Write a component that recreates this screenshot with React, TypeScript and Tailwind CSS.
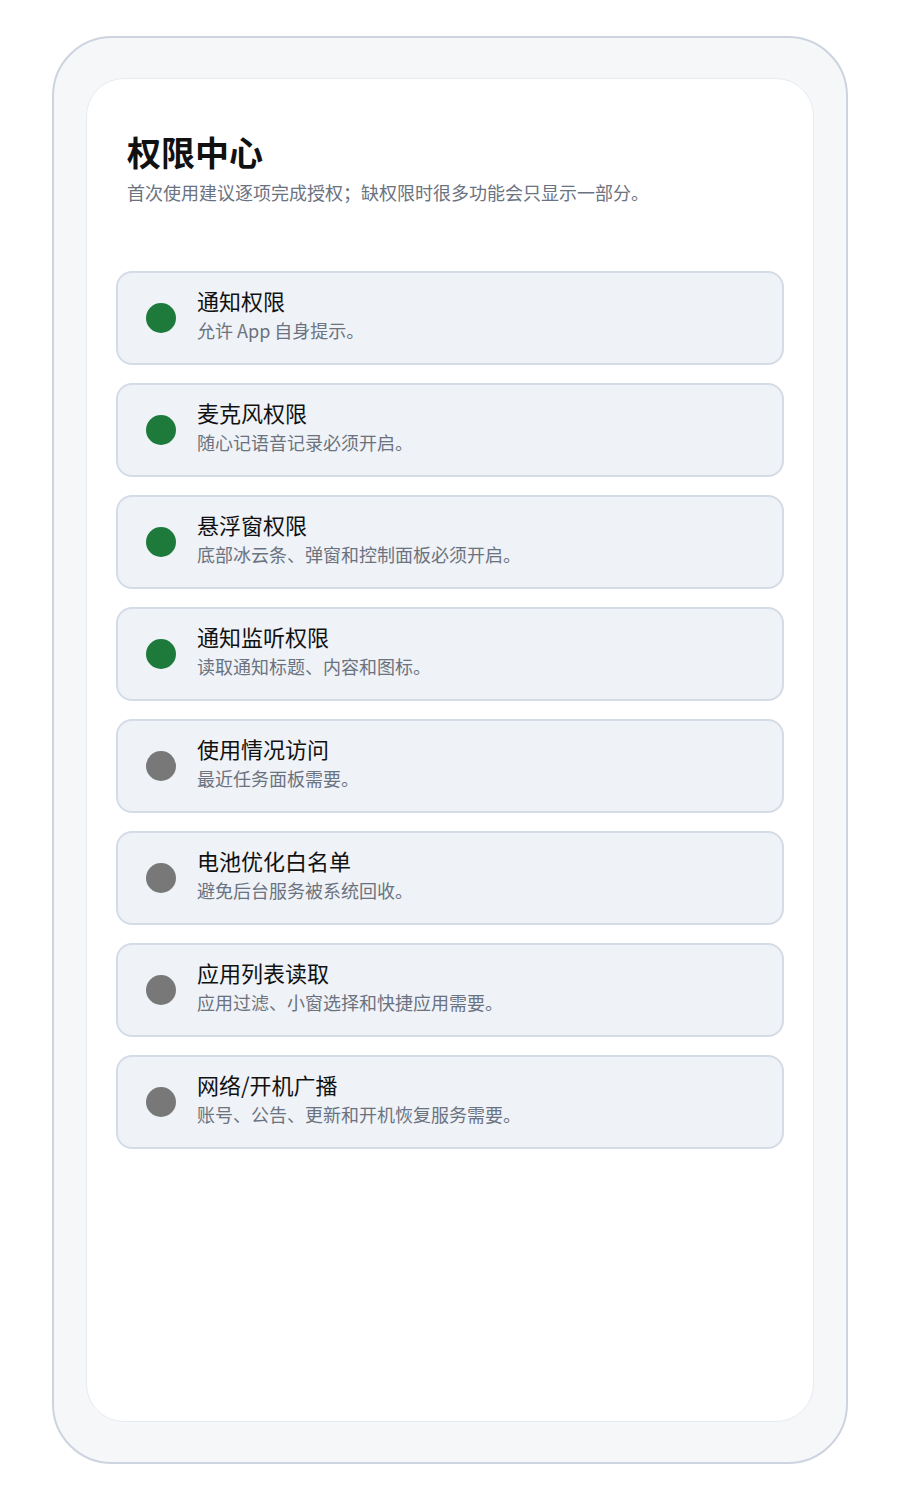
const permissions = [
  { title: "通知权限", desc: "允许 App 自身提示。", granted: true },
  { title: "麦克风权限", desc: "随心记语音记录必须开启。", granted: true },
  { title: "悬浮窗权限", desc: "底部冰云条、弹窗和控制面板必须开启。", granted: true },
  { title: "通知监听权限", desc: "读取通知标题、内容和图标。", granted: true },
  { title: "使用情况访问", desc: "最近任务面板需要。", granted: false },
  { title: "电池优化白名单", desc: "避免后台服务被系统回收。", granted: false },
  { title: "应用列表读取", desc: "应用过滤、小窗选择和快捷应用需要。", granted: false },
  { title: "网络/开机广播", desc: "账号、公告、更新和开机恢复服务需要。", granted: false },
];

export default function App() {
  return (
    <div
      className="min-h-[1500px] bg-white px-[52px] pt-[36px]"
      style={{ fontFamily: '"Noto Sans CJK SC", "Noto Sans", sans-serif' }}
    >
      {/* Device frame */}
      <div className="h-[1428px] rounded-[60px] border-2 border-[#cdd4df] bg-[#f6f7f9] px-[32px] pt-[40px] pb-[40px]">
        <div className="h-full rounded-[38px] border border-[#e7ebf1] bg-white px-[29px] pt-[53px]">
          {/* Header */}
          <div className="px-[11px]">
            <h1 className="text-[34px] font-bold leading-[40px] text-[#111111]">权限中心</h1>
            <p className="mt-2 text-[18px] leading-[24px] text-[#6b7280]">
              首次使用建议逐项完成授权；缺权限时很多功能会只显示一部分。
            </p>
          </div>

          {/* Permission list */}
          <div className="mt-[67px] flex flex-col gap-[18px]">
            {permissions.map((p) => (
              <div
                key={p.title}
                className="flex h-[94px] items-center gap-[21px] rounded-2xl border-2 border-[#d5dce6] bg-[#eff2f7] pl-[28px]"
              >
                <span
                  className={
                    "h-[30px] w-[30px] shrink-0 rounded-full " +
                    (p.granted ? "bg-[#1e7a3a]" : "bg-[#787878]")
                  }
                />
                <div className="-mt-[6px]">
                  <div className="text-[22px] leading-[30px] text-[#111111]">{p.title}</div>
                  <div className="text-[18px] leading-[30px] text-[#6b7280]">{p.desc}</div>
                </div>
              </div>
            ))}
          </div>
        </div>
      </div>
    </div>
  );
}
